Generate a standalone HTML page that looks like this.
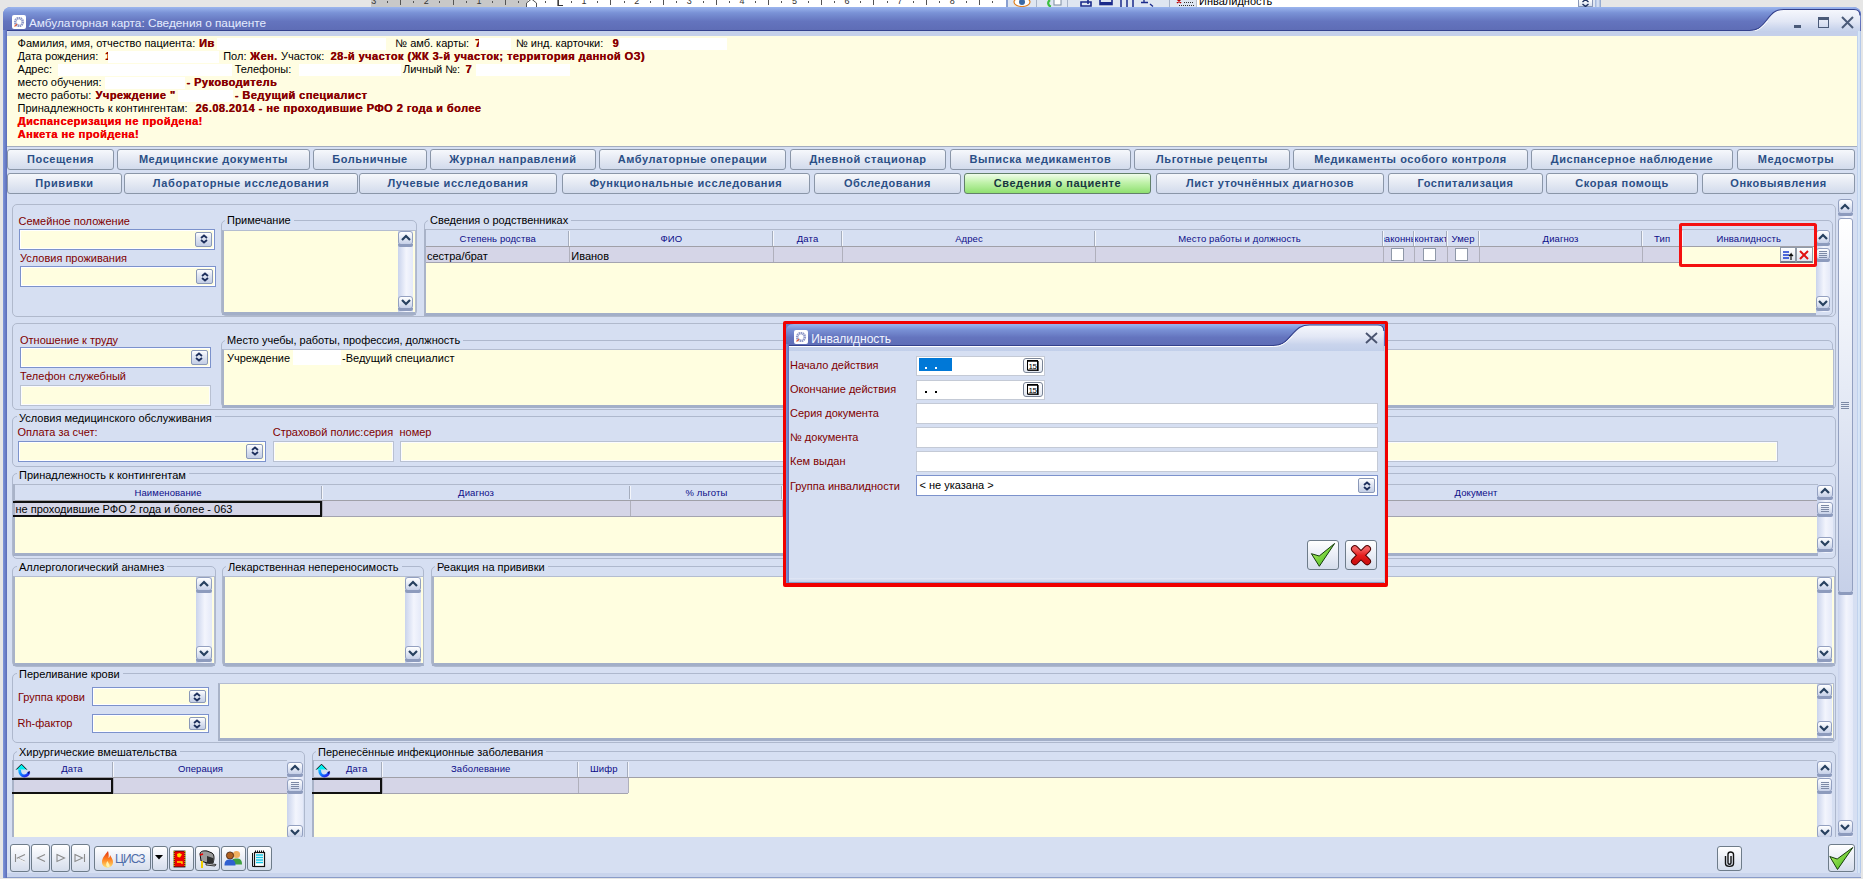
<!DOCTYPE html>
<html><head><meta charset="utf-8">
<style>
*{box-sizing:border-box;margin:0;padding:0}
html,body{width:1863px;height:879px;overflow:hidden;background:#e6e6e6;font-family:"Liberation Sans",sans-serif;font-size:11px;color:#000}
.a{position:absolute}
.t{position:absolute;white-space:nowrap;line-height:13px}
.lbl{color:#800000}
.b{font-weight:bold}
.hd{letter-spacing:0}
.dr{color:#880000;font-weight:bold;letter-spacing:0.45px;text-shadow:0.3px 0 0 #880000}
.rr{color:#f00000;font-weight:bold;letter-spacing:0.45px;text-shadow:0.3px 0 0 #f00000}
.wb{background:#fff}
.tab{position:absolute;height:20px;border:1px solid #8a96a8;border-radius:3px;background:linear-gradient(#f6f8fc,#e4e9f3 50%,#d2dbec);color:#2b4f86;font-weight:bold;letter-spacing:0.55px;text-align:center;line-height:19px;white-space:nowrap;overflow:hidden}
.tab.sel{background:linear-gradient(#f0fdea,#c0f2aa 45%,#8fe070);color:#17373f;border-color:#62806a}
.pnl{position:absolute;border:1px solid #b0b9cc;border-radius:5px}
.grp{position:absolute;border:1px solid #aeb8cd;border-radius:5px}
.cap{position:absolute;white-space:nowrap;line-height:13px;background:#d6dff2;padding:0 3px 0 2px;color:#000}
.inp{position:absolute;background:#fffee0;border:1px solid #b9c1d2;box-shadow:inset 0 0 0 1px #fbfcff}
.cmb{position:absolute;background:#fffee0;border:1px solid #7c92cc;box-shadow:inset 0 0 0 1px #fff}
.cbtn{position:absolute;right:2px;top:2px;bottom:2px;width:17px;border:1px solid #8a98b8;border-radius:2px;background:linear-gradient(#ffffff,#e4e9f4 35%,#c3cee6)}
.memo{position:absolute;background:#fffee0;border-left:2px solid #a9b3c8;border-top:1px solid #b4bdd0;border-bottom:3px solid #a3afc8;border-right:1px solid #b4bdd0}
.sbv{position:absolute;width:15px;background:linear-gradient(90deg,#c9d3ec,#f3f5fd 55%,#e4e9f8)}
.sbb{position:absolute;left:0;width:15px;border:1px solid #93a0c0;border-radius:3px;background:linear-gradient(#ffffff,#e6ebf6 45%,#c6d0e8)}
.sbb:after{content:"";position:absolute;left:-1px;right:-1px;bottom:-3px;height:3px;background:#8d9bbd;border-radius:0 0 2px 2px}
.gh{position:absolute;color:#0c0c88;display:flex;justify-content:center;align-items:center;white-space:nowrap;overflow:hidden;font-size:9.5px;letter-spacing:0.1px;padding-top:1px}
.gsep{position:absolute;width:2px;border-left:1px solid #a5adbd;border-right:1px solid #f4f6fb}
.gt{position:absolute;white-space:nowrap;line-height:16px;color:#000;font-size:11px}
</style></head>
<body>
<!-- window frame -->
<div class="a" style="left:3px;top:7px;width:1858px;height:871px;background:#6a7fc6;border-radius:8px 8px 0 0"></div>
<!-- title bar -->
<svg class="a" style="left:3px;top:7px" width="1858" height="29">
<defs><linearGradient id="mtbb" x1="0" y1="0" x2="0" y2="1"><stop offset="0" stop-color="#9cb6ee"/><stop offset="0.2" stop-color="#7a92d6"/><stop offset="0.5" stop-color="#6474be"/><stop offset="1" stop-color="#5a68b0"/></linearGradient>
<linearGradient id="mtbl" x1="0" y1="0" x2="0" y2="1"><stop offset="0" stop-color="#f6f8fd"/><stop offset="0.45" stop-color="#e2e7f5"/><stop offset="0.75" stop-color="#c9d4ec"/><stop offset="1" stop-color="#c2cfea"/></linearGradient></defs>
<path d="M0 29 V8 Q0 0 8 0 H1850 Q1858 0 1858 8 V29 Z" fill="url(#mtbb)"/>
<path d="M0 29 V23.5 H1746.6 C1754.1 23.5 1757.5 21 1763.7 13 C1769.8 5 1773.2 2.5 1780.7 2.5 H1851 Q1857 2.5 1857 8.5 V29 Z" fill="url(#mtbl)"/>
<path d="M0 23.5 H1746.6 C1754.1 23.5 1757.5 21 1763.7 13 C1769.8 5 1773.2 2.5 1780.7 2.5 H1851 Q1857 2.5 1857 8.5" fill="none" stroke="#34418c" stroke-width="1.1"/>
<path d="M0 24.5 H1746.6 C1754.1 24.5 1757.5 22 1764.7 14" fill="none" stroke="#ffffff" stroke-width="1"/>
</svg>
<!-- icon + title -->
<div class="a" style="left:3px;top:30px;width:4px;height:848px;background:linear-gradient(90deg,#7f96da,#5a6cb8)"></div>
<div class="a" style="left:12px;top:15px;width:14px;height:14px;background:#fff;border-radius:2px"></div>
<svg class="a" style="left:13px;top:16px" width="12" height="12"><circle cx="6" cy="6" r="3.8" fill="none" stroke="#8e98c8" stroke-width="2.6" stroke-dasharray="1.4 0.5"/><path d="M1.5 10.5 L4 8" stroke="#e06040" stroke-width="1.2"/></svg>
<div class="t" style="left:29px;top:16px;font-size:11.8px;line-height:14px;color:#e4ecff">Амбулаторная карта: Сведения о пациенте</div>
<!-- window buttons -->
<div class="a" style="left:1794px;top:25px;width:7px;height:3px;background:#4a5a78"></div>
<div class="a" style="left:1818px;top:17px;width:11px;height:11px;border:1.5px solid #4a5a78;border-top-width:3px"></div>
<svg class="a" style="left:1841px;top:16px" width="13" height="13"><path d="M1 1 L12 12 M12 1 L1 12" stroke="#4a5a78" stroke-width="2"/></svg>

<!-- content -->
<div class="a" style="left:7px;top:31px;width:1850px;height:842px;background:#d6dff2"></div>
<div class="a" style="left:7px;top:31px;width:1853px;height:5px;background:#c5d0ea;border-radius:5px 0 0 0"></div>
<div class="a" style="left:1857px;top:31px;width:4px;height:847px;background:linear-gradient(90deg,#b4c8e8,#e4f0fc 50%,#a4bce4)"></div>
<div class="a" style="left:7px;top:873px;width:1854px;height:5px;background:#c9d4ec;border-bottom:1px solid #8a9cc8"></div>

<!-- header info -->
<div class="a" style="left:7px;top:36px;width:1850px;height:111px;background:#fffde2;border-bottom:1px solid #a3acbf"></div>
<div class="t hd" style="left:17.6px;top:37px">Фамилия, имя, отчество пациента:</div>
<div class="t hd dr" style="left:199px;top:37px">Ив</div>
<div class="t hd" style="left:395.3px;top:37px">№ амб. карты:</div>
<div class="t hd dr" style="left:475px;top:37px">7</div>
<div class="t hd" style="left:516px;top:37px">№ инд. карточки:</div>
<div class="t hd dr" style="left:612.5px;top:37px">9</div>
<div class="t hd" style="left:17.6px;top:50px">Дата рождения:</div>
<div class="t hd dr" style="left:105px;top:50px">1</div>
<div class="t hd" style="left:223.2px;top:50px">Пол:</div>
<div class="t hd dr" style="left:250px;top:50px">Жен.</div>
<div class="t hd" style="left:281px;top:50px">Участок:</div>
<div class="t hd dr" style="left:330.5px;top:50px">28-й участок (ЖК 3-й участок; территория данной ОЗ)</div>
<div class="t hd" style="left:17.6px;top:63px">Адрес:</div>
<div class="t hd" style="left:234.7px;top:63px">Телефоны:</div>
<div class="t hd" style="left:403px;top:63px">Личный №:</div>
<div class="t hd dr" style="left:465.4px;top:63px">7</div>
<div class="t hd" style="left:17.6px;top:76px">место обучения:</div>
<div class="t hd dr" style="left:186.4px;top:76px">- Руководитель</div>
<div class="t hd" style="left:17.6px;top:89px">место работы:</div>
<div class="t hd dr" style="left:95.5px;top:89px">Учреждение "</div>
<div class="t hd dr" style="left:234.7px;top:89px">- Ведущий специалист</div>
<div class="t hd" style="left:17.6px;top:102px">Принадлежность к контингентам:</div>
<div class="t hd dr" style="left:195.5px;top:102px">26.08.2014 - не проходившие РФО 2 года и более</div>
<div class="t hd rr" style="left:17.6px;top:115px">Диспансеризация не пройдена!</div>
<div class="t hd rr" style="left:17.6px;top:128px">Анкета не пройдена!</div>
<div class="a wb" style="left:217px;top:38px;width:169.0px;height:12px"></div>
<div class="a wb" style="left:479px;top:38px;width:32.0px;height:12px"></div>
<div class="a wb" style="left:620px;top:38px;width:107.0px;height:12px"></div>
<div class="a wb" style="left:108px;top:51px;width:110.5px;height:12px"></div>
<div class="a wb" style="left:58px;top:64px;width:174.0px;height:12px"></div>
<div class="a wb" style="left:299px;top:64px;width:102.0px;height:12px"></div>
<div class="a wb" style="left:476px;top:64px;width:93.5px;height:12px"></div>
<div class="a wb" style="left:105px;top:77px;width:79.6px;height:12px"></div>
<div class="a wb" style="left:178px;top:90px;width:55.0px;height:12px"></div>

<!-- tabs -->
<div class="tab" style="left:7px;top:149px;height:21px;width:107px">Посещения</div>
<div class="tab" style="left:117px;top:149px;height:21px;width:193px">Медицинские документы</div>
<div class="tab" style="left:313px;top:149px;height:21px;width:114px">Больничные</div>
<div class="tab" style="left:430px;top:149px;height:21px;width:166px">Журнал направлений</div>
<div class="tab" style="left:599px;top:149px;height:21px;width:187px">Амбулаторные операции</div>
<div class="tab" style="left:790px;top:149px;height:21px;width:156px">Дневной стационар</div>
<div class="tab" style="left:950px;top:149px;height:21px;width:181px">Выписка медикаментов</div>
<div class="tab" style="left:1134px;top:149px;height:21px;width:156px">Льготные рецепты</div>
<div class="tab" style="left:1293px;top:149px;height:21px;width:235px">Медикаменты особого контроля</div>
<div class="tab" style="left:1531px;top:149px;height:21px;width:202px">Диспансерное наблюдение</div>
<div class="tab" style="left:1737px;top:149px;height:21px;width:118px">Медосмотры</div>
<div class="tab" style="left:7px;top:173px;height:21px;width:115px">Прививки</div>
<div class="tab" style="left:124px;top:173px;height:21px;width:234px">Лабораторные исследования</div>
<div class="tab" style="left:359px;top:173px;height:21px;width:198px">Лучевые исследования</div>
<div class="tab" style="left:562px;top:173px;height:21px;width:248px">Функциональные исследования</div>
<div class="tab" style="left:814px;top:173px;height:21px;width:147px">Обследования</div>
<div class="tab sel" style="left:964px;top:173px;height:21px;width:187px">Сведения о пациенте</div>
<div class="tab" style="left:1156px;top:173px;height:21px;width:228px">Лист уточнённых диагнозов</div>
<div class="tab" style="left:1388px;top:173px;height:21px;width:155px">Госпитализация</div>
<div class="tab" style="left:1546px;top:173px;height:21px;width:152px">Скорая помощь</div>
<div class="tab" style="left:1702px;top:173px;height:21px;width:153px">Онковыявления</div>


<!-- body -->
<div class="a" style="left:371px;top:0px;width:157px;height:7px;background:#c8c8c8"></div>
<div class="a" style="left:528px;top:0px;width:478px;height:7px;background:#fff"></div>
<div class="a" style="left:1006px;top:0px;width:2px;height:7px;background:#8aa0d0"></div>
<div class="t" style="left:371.2px;top:-4.5px;font-size:9px;line-height:10px;color:#333">3</div>
<div class="t" style="left:423.8px;top:-4.5px;font-size:9px;line-height:10px;color:#333">2</div>
<div class="t" style="left:476.4px;top:-4.5px;font-size:9px;line-height:10px;color:#333">1</div>
<div class="t" style="left:581.6px;top:-4.5px;font-size:9px;line-height:10px;color:#333">1</div>
<div class="t" style="left:634.2px;top:-4.5px;font-size:9px;line-height:10px;color:#333">2</div>
<div class="t" style="left:686.8px;top:-4.5px;font-size:9px;line-height:10px;color:#333">3</div>
<div class="t" style="left:739.4px;top:-4.5px;font-size:9px;line-height:10px;color:#333">4</div>
<div class="t" style="left:792px;top:-4.5px;font-size:9px;line-height:10px;color:#333">5</div>
<div class="t" style="left:844.6px;top:-4.5px;font-size:9px;line-height:10px;color:#333">6</div>
<div class="t" style="left:897.2px;top:-4.5px;font-size:9px;line-height:10px;color:#333">7</div>
<div class="t" style="left:949.8px;top:-4.5px;font-size:9px;line-height:10px;color:#333">8</div>
<div class="a" style="left:386.9px;top:1px;width:1px;height:2px;background:#555"></div>
<div class="a" style="left:400px;top:0px;width:1px;height:5px;background:#555"></div>
<div class="a" style="left:413.1px;top:1px;width:1px;height:2px;background:#555"></div>
<div class="a" style="left:439.4px;top:1px;width:1px;height:2px;background:#555"></div>
<div class="a" style="left:452.6px;top:0px;width:1px;height:5px;background:#555"></div>
<div class="a" style="left:465.8px;top:1px;width:1px;height:2px;background:#555"></div>
<div class="a" style="left:492.1px;top:1px;width:1px;height:2px;background:#555"></div>
<div class="a" style="left:505.2px;top:0px;width:1px;height:5px;background:#555"></div>
<div class="a" style="left:518.4px;top:1px;width:1px;height:2px;background:#555"></div>
<div class="a" style="left:544.6px;top:1px;width:1px;height:2px;background:#555"></div>
<div class="a" style="left:557.8px;top:0px;width:1px;height:5px;background:#555"></div>
<div class="a" style="left:571px;top:1px;width:1px;height:2px;background:#555"></div>
<div class="a" style="left:597.2px;top:1px;width:1px;height:2px;background:#555"></div>
<div class="a" style="left:610.4px;top:0px;width:1px;height:5px;background:#555"></div>
<div class="a" style="left:623.5px;top:1px;width:1px;height:2px;background:#555"></div>
<div class="a" style="left:649.9px;top:1px;width:1px;height:2px;background:#555"></div>
<div class="a" style="left:663px;top:0px;width:1px;height:5px;background:#555"></div>
<div class="a" style="left:676.1px;top:1px;width:1px;height:2px;background:#555"></div>
<div class="a" style="left:702.5px;top:1px;width:1px;height:2px;background:#555"></div>
<div class="a" style="left:715.6px;top:0px;width:1px;height:5px;background:#555"></div>
<div class="a" style="left:728.8px;top:1px;width:1px;height:2px;background:#555"></div>
<div class="a" style="left:755px;top:1px;width:1px;height:2px;background:#555"></div>
<div class="a" style="left:768.2px;top:0px;width:1px;height:5px;background:#555"></div>
<div class="a" style="left:781.4px;top:1px;width:1px;height:2px;background:#555"></div>
<div class="a" style="left:807.7px;top:1px;width:1px;height:2px;background:#555"></div>
<div class="a" style="left:820.8px;top:0px;width:1px;height:5px;background:#555"></div>
<div class="a" style="left:834px;top:1px;width:1px;height:2px;background:#555"></div>
<div class="a" style="left:860.2px;top:1px;width:1px;height:2px;background:#555"></div>
<div class="a" style="left:873.4px;top:0px;width:1px;height:5px;background:#555"></div>
<div class="a" style="left:886.5px;top:1px;width:1px;height:2px;background:#555"></div>
<div class="a" style="left:912.9px;top:1px;width:1px;height:2px;background:#555"></div>
<div class="a" style="left:926px;top:0px;width:1px;height:5px;background:#555"></div>
<div class="a" style="left:939.2px;top:1px;width:1px;height:2px;background:#555"></div>
<div class="a" style="left:965.5px;top:1px;width:1px;height:2px;background:#555"></div>
<div class="a" style="left:978.6px;top:0px;width:1px;height:5px;background:#555"></div>
<div class="a" style="left:991.8px;top:1px;width:1px;height:2px;background:#555"></div>
<svg class="a" style="left:526px;top:0" width="11" height="7"><path d="M0.5 7 V3 L5.5 -1 L10.5 3 V7" fill="#fff" stroke="#555" stroke-width="1"/></svg>
<svg class="a" style="left:557px;top:0" width="7" height="7"><path d="M1 0 V5.5 H6" fill="none" stroke="#333" stroke-width="1.2"/></svg>
<div class="a" style="left:1008px;top:0px;width:592px;height:7px;background:#dfe6f1"></div>
<svg class="a" style="left:1012px;top:0" width="20" height="7"><ellipse cx="10" cy="2" rx="8" ry="4.5" fill="#fff" stroke="#e08020" stroke-width="1.2"/><circle cx="10" cy="2" r="3" fill="#3a6aa8"/></svg>
<div class="a" style="left:1036px;top:0px;width:1px;height:7px;background:#a8b4c8"></div>
<svg class="a" style="left:1047px;top:0" width="16" height="7"><path d="M3 0 C0 2 1 6 4 6.5" stroke="#3cc040" stroke-width="2.2" fill="none"/><rect x="7" y="-2" width="7" height="7" fill="#fff" stroke="#7a8aa0"/></svg>
<div class="a" style="left:1067px;top:0px;width:1px;height:7px;background:#a8b4c8"></div>
<svg class="a" style="left:1076px;top:0" width="90" height="7"><path d="M2 -1 H12 V4 M5 2 H15 V6 H5 Z" fill="none" stroke="#1a2a8a" stroke-width="1.6"/><rect x="24" y="-1" width="12" height="5.5" fill="none" stroke="#1a2a8a" stroke-width="1.6"/><rect x="24" y="2" width="12" height="2.5" fill="#1a2a8a"/><path d="M45 -1 H57 V7 M51 -1 V7 M45 -1 V7" fill="none" stroke="#1a2a8a" stroke-width="1.5"/><path d="M68 -1 V2 M65 2.5 H72 M74 4 L77 6.5" stroke="#1a2a8a" stroke-width="1.3" fill="none"/></svg>
<div class="a" style="left:1169px;top:0px;width:1px;height:7px;background:#a8b4c8"></div>
<svg class="a" style="left:1176px;top:0" width="20" height="7"><path d="M1 -1 L5 3 M5 -1 L1 3" stroke="#b00" stroke-width="1.5"/><path d="M3 5.5 H18 M8 2.5 H18" stroke="#333" stroke-width="1" stroke-dasharray="1 1"/></svg>
<div class="a" style="left:1196px;top:0px;width:382px;height:7px;background:#fff;border-left:1px solid #b8c0cc"></div>
<div class="t" style="left:1199px;top:-5.5px;font-size:11px;line-height:12px;color:#000">Инвалидность</div>
<div class="a" style="left:1578px;top:0px;width:15px;height:7px;background:linear-gradient(#fff,#d8e0ee);border:1px solid #8a98b8;border-top:none"></div>
<svg class="a" style="left:1581px;top:0" width="9" height="7"><path d="M1.5 2 L4.5 -0.5 L7.5 2 M1.5 4 L4.5 6.5 L7.5 4" stroke="#1d2f5c" stroke-width="1.4" fill="none"/></svg>
<div class="a" style="left:1595px;top:0px;width:6px;height:7px;background:linear-gradient(90deg,#9ab0d8,#dfe8f8,#8aa0c8)"></div>
<div class="a" style="left:1601px;top:0px;width:262px;height:7px;background:#e6e6e6"></div>
<div class="sbv" style="left:1837.5px;top:199px;width:15.5px;height:637.5px;"></div>
<div class="sbb" style="left:1837.5px;top:199px;width:15.5px;height:15px"></div>
<svg class="a" style="left:1840.2px;top:202.5px" width="10" height="8"><path d="M1 6 L5 2 L9 6" fill="none" stroke="#27405f" stroke-width="2.2"/></svg>
<div class="sbb" style="left:1837.5px;top:217.5px;width:15.5px;height:375.5px"></div>
<svg class="a" style="left:1841.2px;top:401.2px" width="8" height="8"><path d="M0 1.5 H8 M0 3.5 H8 M0 5.5 H8 M0 7.5 H8" stroke="#7d8aa6" stroke-width="1"/></svg>
<div class="sbb" style="left:1837.5px;top:820px;width:15.5px;height:13.5px"></div>
<svg class="a" style="left:1840.2px;top:822.8px" width="10" height="8"><path d="M1 2 L5 6 L9 2" fill="none" stroke="#27405f" stroke-width="2.2"/></svg>
<div class="pnl" style="left:12px;top:204px;width:1824px;height:113px;"></div>
<div class="t lbl" style="left:18.5px;top:214.8px;">Семейное положение</div>
<div class="cmb" style="left:19px;top:229px;width:196px;height:20.5px;background:#fffee0"><div class="cbtn"></div></div>
<svg class="a" style="left:199.5px;top:234.2px" width="8" height="10"><path d="M1 4 L4 1.5 L7 4 M1 6 L4 8.5 L7 6" fill="none" stroke="#1d2f5c" stroke-width="1.8"/></svg>
<div class="t lbl" style="left:20px;top:251.7px;">Условия проживания</div>
<div class="cmb" style="left:20px;top:266px;width:196px;height:21px;background:#fffee0"><div class="cbtn"></div></div>
<svg class="a" style="left:200.5px;top:271.5px" width="8" height="10"><path d="M1 4 L4 1.5 L7 4 M1 6 L4 8.5 L7 6" fill="none" stroke="#1d2f5c" stroke-width="1.8"/></svg>
<div class="grp" style="left:220.7px;top:219.8px;width:196.6px;height:96.2px;"></div>
<div class="cap" style="left:225px;top:214.1px;">Примечание</div>
<div class="memo" style="left:222px;top:230.3px;width:193.5px;height:84.7px;"></div>
<div class="sbv" style="left:398.4px;top:231px;width:15.1px;height:81px;"></div>
<div class="sbb" style="left:398.4px;top:231.3px;width:15.1px;height:13.4px"></div>
<svg class="a" style="left:400.9px;top:234px" width="10" height="8"><path d="M1 6 L5 2 L9 6" fill="none" stroke="#27405f" stroke-width="2.2"/></svg>
<div class="sbb" style="left:398.4px;top:295.8px;width:15.1px;height:13.2px"></div>
<svg class="a" style="left:400.9px;top:298.4px" width="10" height="8"><path d="M1 2 L5 6 L9 2" fill="none" stroke="#27405f" stroke-width="2.2"/></svg>
<div class="grp" style="left:424px;top:219.5px;width:1409px;height:96.5px;"></div>
<div class="cap" style="left:428px;top:214.1px;">Сведения о родственниках</div>
<div class="a" style="left:424px;top:229px;width:1391.5px;height:86.5px;background:#fffee0;border-left:2px solid #a9b3c8;border-bottom:3px solid #a3afc8"></div>
<div class="a" style="left:426px;top:229px;width:1389.5px;height:18.4px;background:#d6dff2;border-top:1px solid #b0b9cc"></div>
<div class="a" style="left:426px;top:246.4px;width:1389.5px;height:1px;background:#a0a0a8"></div>
<div class="a" style="left:426px;top:247.4px;width:1389.5px;height:16.1px;background:#d5d5e7;border-bottom:1px solid #a4a4b0"></div>
<div class="gh" style="left:426px;top:229px;width:143.3px;height:17.4px;line-height:17.4px">Степень родства</div>
<div class="gsep" style="left:568.3px;top:231px;width:2px;height:15.4px;"></div>
<div class="a" style="left:569.3px;top:247.4px;width:1px;height:15.1px;background:#b0b0bc"></div>
<div class="gh" style="left:570.3px;top:229px;width:202.2px;height:17.4px;line-height:17.4px">ФИО</div>
<div class="gsep" style="left:771.5px;top:231px;width:2px;height:15.4px;"></div>
<div class="a" style="left:772.5px;top:247.4px;width:1px;height:15.1px;background:#b0b0bc"></div>
<div class="gh" style="left:773.5px;top:229px;width:68.1px;height:17.4px;line-height:17.4px">Дата</div>
<div class="gsep" style="left:840.6px;top:231px;width:2px;height:15.4px;"></div>
<div class="a" style="left:841.6px;top:247.4px;width:1px;height:15.1px;background:#b0b0bc"></div>
<div class="gh" style="left:842.6px;top:229px;width:252.8px;height:17.4px;line-height:17.4px">Адрес</div>
<div class="gsep" style="left:1094.4px;top:231px;width:2px;height:15.4px;"></div>
<div class="a" style="left:1095.4px;top:247.4px;width:1px;height:15.1px;background:#b0b0bc"></div>
<div class="gh" style="left:1096.4px;top:229px;width:286.2px;height:17.4px;line-height:17.4px">Место работы и должность</div>
<div class="gsep" style="left:1381.6px;top:231px;width:2px;height:15.4px;"></div>
<div class="a" style="left:1382.6px;top:247.4px;width:1px;height:15.1px;background:#b0b0bc"></div>
<div class="gh" style="left:1383.6px;top:229px;width:30.8px;height:17.4px;line-height:17.4px">законны</div>
<div class="gsep" style="left:1413.4px;top:231px;width:2px;height:15.4px;"></div>
<div class="a" style="left:1414.4px;top:247.4px;width:1px;height:15.1px;background:#b0b0bc"></div>
<div class="gh" style="left:1415.4px;top:229px;width:31.3px;height:17.4px;line-height:17.4px">контакт</div>
<div class="gsep" style="left:1445.7px;top:231px;width:2px;height:15.4px;"></div>
<div class="a" style="left:1446.7px;top:247.4px;width:1px;height:15.1px;background:#b0b0bc"></div>
<div class="gh" style="left:1447.7px;top:229px;width:30.8px;height:17.4px;line-height:17.4px">Умер</div>
<div class="gsep" style="left:1477.5px;top:231px;width:2px;height:15.4px;"></div>
<div class="a" style="left:1478.5px;top:247.4px;width:1px;height:15.1px;background:#b0b0bc"></div>
<div class="gh" style="left:1479.5px;top:229px;width:162.2px;height:17.4px;line-height:17.4px">Диагноз</div>
<div class="gsep" style="left:1640.7px;top:231px;width:2px;height:15.4px;"></div>
<div class="a" style="left:1641.7px;top:247.4px;width:1px;height:15.1px;background:#b0b0bc"></div>
<div class="gh" style="left:1642.7px;top:229px;width:38.9px;height:17.4px;line-height:17.4px">Тип</div>
<div class="gsep" style="left:1680.6px;top:231px;width:2px;height:15.4px;"></div>
<div class="a" style="left:1681.6px;top:247.4px;width:1px;height:15.1px;background:#b0b0bc"></div>
<div class="gh" style="left:1682.6px;top:229px;width:132.4px;height:17.4px;line-height:17.4px">Инвалидность</div>
<div class="gt" style="left:427px;top:247.9px;line-height:16.1px">сестра/брат</div>
<div class="gt" style="left:571.3px;top:247.9px;line-height:16.1px">Иванов</div>
<div class="a" style="left:1391px;top:248px;width:13px;height:13px;background:#fff;border:1px solid #8f98a8"></div>
<div class="a" style="left:1423px;top:248px;width:13px;height:13px;background:#fff;border:1px solid #8f98a8"></div>
<div class="a" style="left:1455.2px;top:248px;width:13px;height:13px;background:#fff;border:1px solid #8f98a8"></div>
<div class="a" style="left:1680px;top:246.5px;width:135px;height:17px;background:#fffee0"></div>
<div class="a" style="left:1780.4px;top:247px;width:16px;height:16px;background:linear-gradient(#fff,#dde3ef);border:1px solid #909aa8;border-bottom:2px solid #707a88"></div>
<svg class="a" style="left:1783px;top:250px" width="11" height="11"><path d="M0 2 H6 M0 5 H6 M0 8 H6" stroke="#1a3ad0" stroke-width="1.4"/><path d="M8 10 V4 L6 6 M8 4 L10 6" stroke="#111" stroke-width="1.2" fill="none"/></svg>
<div class="a" style="left:1796.4px;top:247px;width:16.4px;height:16px;background:linear-gradient(#fff,#dde3ef);border:1px solid #909aa8;border-bottom:2px solid #707a88"></div>
<svg class="a" style="left:1799px;top:250px" width="10" height="10"><path d="M1 1 L9 9 M9 1 L1 9" stroke="#e01010" stroke-width="2"/></svg>
<div class="sbv" style="left:1815.8px;top:230.4px;width:14.6px;height:82.1px;"></div>
<div class="sbb" style="left:1815.8px;top:230.4px;width:14.6px;height:13.2px"></div>
<svg class="a" style="left:1818.1px;top:233px" width="10" height="8"><path d="M1 6 L5 2 L9 6" fill="none" stroke="#27405f" stroke-width="2.2"/></svg>
<div class="sbb" style="left:1815.8px;top:248.2px;width:14.6px;height:12.1px"></div>
<svg class="a" style="left:1819.1px;top:250.2px" width="8" height="8"><path d="M0 1.5 H8 M0 3.5 H8 M0 5.5 H8 M0 7.5 H8" stroke="#7d8aa6" stroke-width="1"/></svg>
<div class="sbb" style="left:1815.8px;top:296.3px;width:14.6px;height:13.2px"></div>
<svg class="a" style="left:1818.1px;top:298.9px" width="10" height="8"><path d="M1 2 L5 6 L9 2" fill="none" stroke="#27405f" stroke-width="2.2"/></svg>
<div class="a" style="left:1679px;top:223px;width:138px;height:44px;border:3.2px solid #f41010;border-radius:2.5px"></div>
<div class="pnl" style="left:12px;top:323px;width:1824px;height:87px;"></div>
<div class="t lbl" style="left:20px;top:333.7px;">Отношение к труду</div>
<div class="cmb" style="left:20px;top:347px;width:190.5px;height:20.5px;background:#fffee0"><div class="cbtn"></div></div>
<svg class="a" style="left:195px;top:352.2px" width="8" height="10"><path d="M1 4 L4 1.5 L7 4 M1 6 L4 8.5 L7 6" fill="none" stroke="#1d2f5c" stroke-width="1.8"/></svg>
<div class="t lbl" style="left:20px;top:369.5px;">Телефон служебный</div>
<div class="inp" style="left:20px;top:385px;width:190.5px;height:20.5px;background:#fffee0"></div>
<div class="grp" style="left:220.7px;top:339.6px;width:1612.8px;height:68.9px;"></div>
<div class="cap" style="left:225px;top:333.7px;">Место учебы, работы, профессия, должность</div>
<div class="memo" style="left:222px;top:348.7px;width:1611.5px;height:59.3px;"></div>
<div class="t" style="left:227px;top:351.5px;">Учреждение</div>
<div class="a" style="left:293px;top:350px;width:48px;height:15px;background:#fff"></div>
<div class="t" style="left:342px;top:351.5px;">-Ведущий специалист</div>
<div class="grp" style="left:12px;top:416px;width:1824px;height:51px;"></div>
<div class="cap" style="left:17px;top:411.5px;">Условия медицинского обслуживания</div>
<div class="t lbl" style="left:17.5px;top:425.5px;">Оплата за счет:</div>
<div class="cmb" style="left:18px;top:441px;width:248px;height:20.5px;background:#fffee0"><div class="cbtn"></div></div>
<svg class="a" style="left:250.5px;top:446.2px" width="8" height="10"><path d="M1 4 L4 1.5 L7 4 M1 6 L4 8.5 L7 6" fill="none" stroke="#1d2f5c" stroke-width="1.8"/></svg>
<div class="t lbl" style="left:272.7px;top:425.5px;">Страховой полис:серия</div>
<div class="inp" style="left:273px;top:441px;width:121px;height:20.5px;background:#fffee0"></div>
<div class="t lbl" style="left:399.5px;top:425.5px;">номер</div>
<div class="inp" style="left:400px;top:441px;width:1378px;height:20.5px;background:#fffee0"></div>
<div class="grp" style="left:12px;top:473px;width:1824px;height:86px;"></div>
<div class="cap" style="left:17px;top:468.5px;">Принадлежность к контингентам</div>
<div class="a" style="left:12.5px;top:484.4px;width:1805px;height:71.6px;background:#fffee0;border-left:2px solid #a9b3c8;border-bottom:3px solid #a3afc8"></div>
<div class="a" style="left:14.5px;top:484.4px;width:1803px;height:16.1px;background:#d6dff2;border-top:1px solid #b0b9cc"></div>
<div class="a" style="left:14.5px;top:499.5px;width:1803px;height:1px;background:#a0a0a8"></div>
<div class="a" style="left:14.5px;top:500.5px;width:1803px;height:16px;background:#d5d5e7;border-bottom:1px solid #a4a4b0"></div>
<div class="gh" style="left:14.5px;top:484.4px;width:307.1px;height:15.1px;line-height:15.1px">Наименование</div>
<div class="gsep" style="left:320.6px;top:486.4px;width:2px;height:13.1px;"></div>
<div class="a" style="left:321.6px;top:500.5px;width:1px;height:15px;background:#b0b0bc"></div>
<div class="gh" style="left:322.6px;top:484.4px;width:307px;height:15.1px;line-height:15.1px">Диагноз</div>
<div class="gsep" style="left:628.6px;top:486.4px;width:2px;height:13.1px;"></div>
<div class="a" style="left:629.6px;top:500.5px;width:1px;height:15px;background:#b0b0bc"></div>
<div class="gh" style="left:630.6px;top:484.4px;width:151.7px;height:15.1px;line-height:15.1px">% льготы</div>
<div class="gsep" style="left:781.3px;top:486.4px;width:2px;height:13.1px;"></div>
<div class="a" style="left:782.3px;top:500.5px;width:1px;height:15px;background:#b0b0bc"></div>
<div class="gh" style="left:783.3px;top:484.4px;width:176.7px;height:15.1px;line-height:15.1px">Дата начала</div>
<div class="gsep" style="left:959px;top:486.4px;width:2px;height:13.1px;"></div>
<div class="a" style="left:960px;top:500.5px;width:1px;height:15px;background:#b0b0bc"></div>
<div class="gh" style="left:961px;top:484.4px;width:173px;height:15.1px;line-height:15.1px">Дата окончания</div>
<div class="gsep" style="left:1133px;top:486.4px;width:2px;height:13.1px;"></div>
<div class="a" style="left:1134px;top:500.5px;width:1px;height:15px;background:#b0b0bc"></div>
<div class="gh" style="left:1135px;top:484.4px;width:682px;height:15.1px;line-height:15.1px">Документ</div>
<div class="gt" style="left:15.5px;top:501px;line-height:16px">не проходившие РФО 2 года и более - 063</div>
<div class="a" style="left:12.5px;top:500.5px;width:309.1px;height:16px;border:2px solid #111;border-left:none"></div>
<div class="sbv" style="left:1817px;top:484.7px;width:16px;height:68.3px;"></div>
<div class="sbb" style="left:1817px;top:484.7px;width:16px;height:13.5px"></div>
<svg class="a" style="left:1820px;top:487.4px" width="10" height="8"><path d="M1 6 L5 2 L9 6" fill="none" stroke="#27405f" stroke-width="2.2"/></svg>
<div class="sbb" style="left:1817px;top:501.5px;width:16px;height:13.5px"></div>
<svg class="a" style="left:1821px;top:504.2px" width="8" height="8"><path d="M0 1.5 H8 M0 3.5 H8 M0 5.5 H8 M0 7.5 H8" stroke="#7d8aa6" stroke-width="1"/></svg>
<div class="sbb" style="left:1817px;top:536.5px;width:16px;height:13.5px"></div>
<svg class="a" style="left:1820px;top:539.2px" width="10" height="8"><path d="M1 2 L5 6 L9 2" fill="none" stroke="#27405f" stroke-width="2.2"/></svg>
<div class="grp" style="left:12px;top:566px;width:203.5px;height:101px;"></div>
<div class="cap" style="left:17px;top:560.5px;">Аллергологический анамнез</div>
<div class="memo" style="left:13px;top:575.8px;width:201.5px;height:90.2px;"></div>
<div class="sbv" style="left:196px;top:576.5px;width:16px;height:86.5px;"></div>
<div class="sbb" style="left:196px;top:577px;width:16px;height:14px"></div>
<svg class="a" style="left:199px;top:580px" width="10" height="8"><path d="M1 6 L5 2 L9 6" fill="none" stroke="#27405f" stroke-width="2.2"/></svg>
<div class="sbb" style="left:196px;top:646px;width:16px;height:14px"></div>
<svg class="a" style="left:199px;top:649px" width="10" height="8"><path d="M1 2 L5 6 L9 2" fill="none" stroke="#27405f" stroke-width="2.2"/></svg>
<div class="grp" style="left:221.6px;top:566px;width:202.9px;height:101px;"></div>
<div class="cap" style="left:226px;top:560.5px;">Лекарственная непереносимость</div>
<div class="memo" style="left:222.5px;top:575.8px;width:201px;height:90.2px;"></div>
<div class="sbv" style="left:405px;top:576.5px;width:15.8px;height:86.5px;"></div>
<div class="sbb" style="left:405px;top:577px;width:15.8px;height:14px"></div>
<svg class="a" style="left:407.9px;top:580px" width="10" height="8"><path d="M1 6 L5 2 L9 6" fill="none" stroke="#27405f" stroke-width="2.2"/></svg>
<div class="sbb" style="left:405px;top:646px;width:15.8px;height:14px"></div>
<svg class="a" style="left:407.9px;top:649px" width="10" height="8"><path d="M1 2 L5 6 L9 2" fill="none" stroke="#27405f" stroke-width="2.2"/></svg>
<div class="grp" style="left:431px;top:566px;width:1405px;height:101px;"></div>
<div class="cap" style="left:435px;top:560.5px;">Реакция на прививки</div>
<div class="memo" style="left:432px;top:575.8px;width:1402.5px;height:90.2px;"></div>
<div class="sbv" style="left:1816.6px;top:576.5px;width:15.4px;height:86.5px;"></div>
<div class="sbb" style="left:1816.6px;top:577px;width:15.4px;height:14px"></div>
<svg class="a" style="left:1819.3px;top:580px" width="10" height="8"><path d="M1 6 L5 2 L9 6" fill="none" stroke="#27405f" stroke-width="2.2"/></svg>
<div class="sbb" style="left:1816.6px;top:646px;width:15.4px;height:14px"></div>
<svg class="a" style="left:1819.3px;top:649px" width="10" height="8"><path d="M1 2 L5 6 L9 2" fill="none" stroke="#27405f" stroke-width="2.2"/></svg>
<div class="grp" style="left:12px;top:673px;width:1824px;height:70px;"></div>
<div class="cap" style="left:17px;top:667.7px;">Переливание крови</div>
<div class="t lbl" style="left:18px;top:690.9px;">Группа крови</div>
<div class="cmb" style="left:92.3px;top:686.6px;width:116.5px;height:19.8px;background:#fffee0"><div class="cbtn"></div></div>
<svg class="a" style="left:193.3px;top:691.5px" width="8" height="10"><path d="M1 4 L4 1.5 L7 4 M1 6 L4 8.5 L7 6" fill="none" stroke="#1d2f5c" stroke-width="1.8"/></svg>
<div class="t lbl" style="left:17.5px;top:716.7px;">Rh-фактор</div>
<div class="cmb" style="left:92.3px;top:713.7px;width:116.5px;height:19.8px;background:#fffee0"><div class="cbtn"></div></div>
<svg class="a" style="left:193.3px;top:718.6px" width="8" height="10"><path d="M1 4 L4 1.5 L7 4 M1 6 L4 8.5 L7 6" fill="none" stroke="#1d2f5c" stroke-width="1.8"/></svg>
<div class="memo" style="left:217.8px;top:682.7px;width:1616.7px;height:58.3px;"></div>
<div class="sbv" style="left:1816.6px;top:683.5px;width:15.4px;height:54px;"></div>
<div class="sbb" style="left:1816.6px;top:684.4px;width:15.4px;height:13.1px"></div>
<svg class="a" style="left:1819.3px;top:687px" width="10" height="8"><path d="M1 6 L5 2 L9 6" fill="none" stroke="#27405f" stroke-width="2.2"/></svg>
<div class="sbb" style="left:1816.6px;top:721.3px;width:15.4px;height:13.2px"></div>
<svg class="a" style="left:1819.3px;top:723.9px" width="10" height="8"><path d="M1 2 L5 6 L9 2" fill="none" stroke="#27405f" stroke-width="2.2"/></svg>
<div class="grp" style="left:12.5px;top:750.5px;width:292.5px;height:94.5px;"></div>
<div class="cap" style="left:17px;top:745.5px;">Хирургические вмешательства</div>
<div class="a" style="left:12.8px;top:836.7px;width:293.2px;height:8.3px;background:#d6dff2"></div>
<div class="a" style="left:12px;top:760px;width:275.4px;height:80px;background:#fffee0;border-left:2px solid #a9b3c8;border-bottom:3px solid #a3afc8"></div>
<div class="a" style="left:14px;top:760px;width:273.4px;height:17.5px;background:#d6dff2;border-top:1px solid #b0b9cc"></div>
<div class="a" style="left:14px;top:776.5px;width:273.4px;height:1px;background:#a0a0a8"></div>
<div class="a" style="left:14px;top:777.5px;width:273.4px;height:16.5px;background:#d5d5e7;border-bottom:1px solid #a4a4b0"></div>
<div class="gh" style="left:31px;top:760px;width:82px;height:16.5px;line-height:16.5px">Дата</div>
<div class="gsep" style="left:112px;top:762px;width:2px;height:14.5px;"></div>
<div class="a" style="left:113px;top:777.5px;width:1px;height:15.5px;background:#b0b0bc"></div>
<div class="gh" style="left:114px;top:760px;width:173px;height:16.5px;line-height:16.5px">Операция</div>
<div class="a" style="left:12px;top:777.5px;width:101px;height:16.5px;border:2px solid #111;border-left:none"></div>
<div class="sbv" style="left:287.4px;top:761.5px;width:15.2px;height:78.5px;"></div>
<div class="sbb" style="left:287.4px;top:761.5px;width:15.2px;height:13.5px"></div>
<svg class="a" style="left:290px;top:764.2px" width="10" height="8"><path d="M1 6 L5 2 L9 6" fill="none" stroke="#27405f" stroke-width="2.2"/></svg>
<div class="sbb" style="left:287.4px;top:778.5px;width:15.2px;height:13.5px"></div>
<svg class="a" style="left:291px;top:781.2px" width="8" height="8"><path d="M0 1.5 H8 M0 3.5 H8 M0 5.5 H8 M0 7.5 H8" stroke="#7d8aa6" stroke-width="1"/></svg>
<div class="sbb" style="left:287.4px;top:825px;width:15.2px;height:13px"></div>
<svg class="a" style="left:290px;top:827.5px" width="10" height="8"><path d="M1 2 L5 6 L9 2" fill="none" stroke="#27405f" stroke-width="2.2"/></svg>
<div class="a" style="left:10px;top:836.7px;width:1826px;height:8.3px;background:#d6dff2"></div>
<div class="grp" style="left:311.8px;top:750.5px;width:1524.2px;height:94.5px;"></div>
<div class="cap" style="left:316px;top:745.5px;">Перенесённые инфекционные заболевания</div>
<div class="a" style="left:312px;top:760px;width:1505.3px;height:85px;background:#fffee0;border-left:2px solid #a9b3c8;border-bottom:3px solid #a3afc8"></div>
<div class="a" style="left:314px;top:760px;width:1503.3px;height:17.5px;background:#d6dff2;border-top:1px solid #b0b9cc"></div>
<div class="a" style="left:314px;top:776.5px;width:1503.3px;height:1px;background:#a0a0a8"></div>
<div class="a" style="left:314px;top:777.5px;width:314.3px;height:16.5px;background:#d5d5e7;border-bottom:1px solid #a4a4b0"></div>
<div class="gh" style="left:331px;top:760px;width:51.2px;height:16.5px;line-height:16.5px">Дата</div>
<div class="gsep" style="left:381.2px;top:762px;width:2px;height:14.5px;"></div>
<div class="a" style="left:382.2px;top:777.5px;width:1px;height:15.5px;background:#b0b0bc"></div>
<div class="gh" style="left:383.2px;top:760px;width:195.1px;height:16.5px;line-height:16.5px">Заболевание</div>
<div class="gsep" style="left:577.3px;top:762px;width:2px;height:14.5px;"></div>
<div class="a" style="left:578.3px;top:777.5px;width:1px;height:15.5px;background:#b0b0bc"></div>
<div class="gh" style="left:579.3px;top:760px;width:49px;height:16.5px;line-height:16.5px">Шифр</div>
<div class="gsep" style="left:627.3px;top:762px;width:2px;height:14.5px;"></div>
<div class="a" style="left:628.3px;top:777.5px;width:1px;height:15.5px;background:#b0b0bc"></div>
<div class="a" style="left:312px;top:777.5px;width:70.2px;height:16.5px;border:2px solid #111;border-left:none"></div>
<div class="sbv" style="left:1817.3px;top:761.4px;width:15.1px;height:78.6px;"></div>
<div class="sbb" style="left:1817.3px;top:761.4px;width:15.1px;height:13.5px"></div>
<svg class="a" style="left:1819.8px;top:764.1px" width="10" height="8"><path d="M1 6 L5 2 L9 6" fill="none" stroke="#27405f" stroke-width="2.2"/></svg>
<div class="sbb" style="left:1817.3px;top:778px;width:15.1px;height:14px"></div>
<svg class="a" style="left:1820.8px;top:781px" width="8" height="8"><path d="M0 1.5 H8 M0 3.5 H8 M0 5.5 H8 M0 7.5 H8" stroke="#7d8aa6" stroke-width="1"/></svg>
<div class="sbb" style="left:1817.3px;top:825px;width:15.1px;height:13px"></div>
<svg class="a" style="left:1819.8px;top:827.5px" width="10" height="8"><path d="M1 2 L5 6 L9 2" fill="none" stroke="#27405f" stroke-width="2.2"/></svg>
<div class="a" style="left:10px;top:836.7px;width:1826px;height:8.3px;background:#d6dff2"></div>
<svg class="a" style="left:15px;top:763px" width="16" height="15"><defs><linearGradient id="si15" x1="0" y1="0" x2="1" y2="1"><stop offset="0" stop-color="#10c0ff"/><stop offset="0.6" stop-color="#1060ff"/><stop offset="1" stop-color="#3010e0"/></linearGradient></defs><path d="M4.6 6.5 C4.6 10.5 6.5 13 9.2 13 C11.5 13 13.2 11.5 14 9.3" fill="none" stroke="url(#si15)" stroke-width="2.8"/><path d="M14.5 8.3 L13.2 10.3" stroke="#000060" stroke-width="1.4"/><path d="M1.2 6.6 L6.5 1.2 L11.8 6.6 Z" fill="#00f0f0"/><path d="M1.2 6.6 L6.5 1.2 L11.8 6.6" fill="none" stroke="#101010" stroke-width="1"/></svg>
<svg class="a" style="left:314.5px;top:763px" width="16" height="15"><defs><linearGradient id="si314" x1="0" y1="0" x2="1" y2="1"><stop offset="0" stop-color="#10c0ff"/><stop offset="0.6" stop-color="#1060ff"/><stop offset="1" stop-color="#3010e0"/></linearGradient></defs><path d="M4.6 6.5 C4.6 10.5 6.5 13 9.2 13 C11.5 13 13.2 11.5 14 9.3" fill="none" stroke="url(#si314)" stroke-width="2.8"/><path d="M14.5 8.3 L13.2 10.3" stroke="#000060" stroke-width="1.4"/><path d="M1.2 6.6 L6.5 1.2 L11.8 6.6 Z" fill="#00f0f0"/><path d="M1.2 6.6 L6.5 1.2 L11.8 6.6" fill="none" stroke="#101010" stroke-width="1"/></svg>
<div class="a" style="left:10px;top:844px;width:19.5px;height:27.5px;border:1px solid #6e7c8a;border-radius:3px;background:linear-gradient(#ffffff,#eef1f8 40%,#d5ddec);"></div>
<div class="a" style="left:30.5px;top:844px;width:19px;height:27.5px;border:1px solid #6e7c8a;border-radius:3px;background:linear-gradient(#ffffff,#eef1f8 40%,#d5ddec);"></div>
<div class="a" style="left:50.5px;top:844px;width:19px;height:27.5px;border:1px solid #6e7c8a;border-radius:3px;background:linear-gradient(#ffffff,#eef1f8 40%,#d5ddec);"></div>
<div class="a" style="left:70.5px;top:844px;width:19px;height:27.5px;border:1px solid #6e7c8a;border-radius:3px;background:linear-gradient(#ffffff,#eef1f8 40%,#d5ddec);"></div>
<svg class="a" style="left:14px;top:853px" width="12" height="10"><path d="M1.5 1 V9 M11 1.5 L3.5 5 L11 8.5" fill="none" stroke="#8a8a8a" stroke-width="1.1"/><path d="M4 5.6 L11 9" stroke="#fff" stroke-width="1"/></svg>
<svg class="a" style="left:35px;top:853px" width="12" height="10"><path d="M10 1.5 L2.5 5 L10 8.5" fill="none" stroke="#8a8a8a" stroke-width="1.1"/></svg>
<svg class="a" style="left:55px;top:853px" width="12" height="10"><path d="M2 1.5 L9.5 5 L2 8.5 Z" fill="none" stroke="#8a8a8a" stroke-width="1.1"/></svg>
<svg class="a" style="left:74px;top:853px" width="12" height="10"><path d="M1 1.5 L8.5 5 L1 8.5 Z M10.5 1 V9" fill="none" stroke="#8a8a8a" stroke-width="1.1"/></svg>
<div class="a" style="left:94.1px;top:846.2px;width:56.6px;height:24.5px;border:1px solid #6e7c8a;border-radius:3px;background:linear-gradient(#ffffff,#eef1f8 40%,#d5ddec);"></div>
<svg class="a" style="left:101px;top:851px" width="13" height="17"><defs><linearGradient id="fg" x1="0" y1="1" x2="0" y2="0"><stop offset="0" stop-color="#ffe070"/><stop offset="0.5" stop-color="#ff8020"/><stop offset="1" stop-color="#e03010"/></linearGradient></defs><path d="M7 0 C4 4 1 7 1 11 C1 15 4 16.5 6.5 16.5 C10 16.5 12 14 12 11 C12 8 10 6 9 4 C9 6 8 7 7.5 7 C8 4 7.5 2 7 0 Z" fill="url(#fg)"/><path d="M6.5 16 C5 15 4.5 13 6.5 10 C7 12 9 13 8.5 16 Z" fill="#fff2b0"/></svg>
<div class="t" style="left:115px;top:852px;font-size:12px;line-height:14px;color:#4d6ca8;letter-spacing:-0.9px">ЦИСЗ</div>
<div class="a" style="left:151.7px;top:846.2px;width:15.9px;height:24.5px;border:1px solid #6e7c8a;border-radius:3px;background:linear-gradient(#ffffff,#eef1f8 40%,#d5ddec);"></div>
<svg class="a" style="left:155px;top:855px" width="8" height="5"><path d="M0 0 H8 L4 4.5 Z" fill="#000"/></svg>
<div class="a" style="left:169.4px;top:846.2px;width:24.2px;height:24.5px;border:1px solid #6e7c8a;border-radius:3px;background:linear-gradient(#ffffff,#eef1f8 40%,#d5ddec);"></div>
<svg class="a" style="left:173px;top:850px" width="14" height="18"><rect x="1" y="1" width="11" height="16" fill="#ee0000" stroke="#111" stroke-width="0.8"/><path d="M1 1 V17 M12 1 V17" stroke="#ff0" stroke-width="1" stroke-dasharray="1 1"/><path d="M4 4 L6.5 3 L9 4.5 L7 7.5 L4.5 7 Z" fill="#ffe000"/><path d="M4 12 H9 V14" stroke="#ffe000" stroke-width="1.3" fill="none"/></svg>
<div class="a" style="left:195.1px;top:846.2px;width:24.5px;height:24.5px;border:1px solid #6e7c8a;border-radius:3px;background:linear-gradient(#ffffff,#eef1f8 40%,#d5ddec);"></div>
<svg class="a" style="left:198px;top:850px" width="19" height="18"><path d="M2 4 C2 1 6 0.5 9 1 L14 3 C17 5 16 10 15 13 L9 13 L3 11 Z" fill="#9a9a9a" stroke="#111" stroke-width="1"/><path d="M9 6 L15 8 L15 13 L9 13 Z" fill="#303030"/><path d="M8 13 L18 14.5 L17 16 L8 15 Z" fill="#c8c8c8" stroke="#111" stroke-width="0.8"/><path d="M4 11 V18" stroke="#f0d000" stroke-width="2"/><path d="M2 5 L5 4" stroke="#e00" stroke-width="1.5"/></svg>
<div class="a" style="left:221.1px;top:846.2px;width:24.5px;height:24.5px;border:1px solid #6e7c8a;border-radius:3px;background:linear-gradient(#ffffff,#eef1f8 40%,#d5ddec);"></div>
<svg class="a" style="left:224px;top:850px" width="19" height="16"><circle cx="12.5" cy="4.5" r="3.6" fill="#f0b060"/><path d="M7 14.5 C7 9.5 9 8.5 12.5 8.5 C16 8.5 18 9.5 18 14.5 Z" fill="#40a040"/><circle cx="6" cy="5.5" r="3.6" fill="#b06020" stroke="#402010" stroke-width="0.8"/><path d="M0.5 15.5 C0.5 10.5 2.5 9.5 6 9.5 C9.5 9.5 11.5 10.5 11.5 15.5 Z" fill="#3060d0"/></svg>
<div class="a" style="left:247.1px;top:846.2px;width:24.5px;height:24.5px;border:1px solid #6e7c8a;border-radius:3px;background:linear-gradient(#ffffff,#eef1f8 40%,#d5ddec);"></div>
<svg class="a" style="left:251px;top:850px" width="16" height="18"><path d="M1.5 3 V16.5 H11" fill="none" stroke="#111" stroke-width="1"/><rect x="3.5" y="2.5" width="10" height="14" fill="#fff" stroke="#111" stroke-width="1.2"/><path d="M5 5 H12 M5 7.5 H12 M5 10 H12 M5 12.5 H12" stroke="#18c8e8" stroke-width="1.3"/><path d="M4.5 0.5 V3 M6.5 0.5 V3 M8.5 0.5 V3 M10.5 0.5 V3 M12.5 0.5 V3" stroke="#111" stroke-width="1"/></svg>
<div class="a" style="left:1717.3px;top:846.2px;width:24.4px;height:24.4px;border:1px solid #6e7c8a;border-radius:3px;background:linear-gradient(#ffffff,#eef1f8 40%,#d5ddec);"></div>
<svg class="a" style="left:1723.5px;top:850.5px" width="12" height="17"><path d="M1.5 5 V12.5 C1.5 16.3 9.5 16.3 9.5 12.5 V3.2 C9.5 0.2 4 0.2 4 3.2 V11.8 C4 13.8 7 13.8 7 11.8 V5" fill="none" stroke="#111" stroke-width="1.4"/></svg>
<div class="a" style="left:1827.5px;top:844.3px;width:27.3px;height:27.3px;border:1px solid #6e7c8a;border-radius:3px;background:linear-gradient(#ffffff,#eef1f8 40%,#d5ddec);"></div>
<svg class="a" style="left:1829px;top:846px" width="25" height="24"><defs><linearGradient id="cg" x1="0" y1="0" x2="1" y2="1"><stop offset="0" stop-color="#c8f870"/><stop offset="1" stop-color="#30b010"/></linearGradient></defs><path d="M0.8 10.5 L8.2 13 L23.8 1.5 L8.5 23.5 Z" fill="url(#cg)" stroke="#143c0a" stroke-width="1" stroke-linejoin="round"/></svg>
<div class="a" style="left:783.2px;top:320.8px;width:604.8px;height:265.8px;background:#f00000;border-radius:2px"></div>
<div class="a" style="left:786.1px;top:324px;width:598.9px;height:259.2px;background:#6a80c8"></div>
<div class="a" style="left:789px;top:345.5px;width:595.5px;height:232.5px;background:#d6dff2"></div>
<svg class="a" style="left:786.1px;top:324px" width="598.9" height="27">
<defs><linearGradient id="dtbb" x1="0" y1="0" x2="0" y2="1"><stop offset="0" stop-color="#9cb6ee"/><stop offset="0.2" stop-color="#7a92d6"/><stop offset="0.5" stop-color="#6474be"/><stop offset="1" stop-color="#5a68b0"/></linearGradient>
<linearGradient id="dtbl" x1="0" y1="0" x2="0" y2="1"><stop offset="0" stop-color="#f6f8fd"/><stop offset="0.45" stop-color="#e2e7f5"/><stop offset="0.75" stop-color="#c9d4ec"/><stop offset="1" stop-color="#c2cfea"/></linearGradient></defs>
<path d="M0 27 V8 Q0 0 8 0 H590.9 Q598.9 0 598.9 8 V27 Z" fill="url(#dtbb)"/>
<path d="M0 27 V21.5 H487.2 C495.2 21.5 498.8 19 505.4 11.2 C512 3.5 515.6 1 523.6 1 H591.9 Q597.9 1 597.9 7 V27 Z" fill="url(#dtbl)"/>
<path d="M0 21.5 H487.2 C495.2 21.5 498.8 19 505.4 11.2 C512 3.5 515.6 1 523.6 1 H591.9 Q597.9 1 597.9 7" fill="none" stroke="#34418c" stroke-width="1.1"/>
<path d="M0 22.5 H487.2 C495.2 22.5 498.8 20 506.4 12.2" fill="none" stroke="#ffffff" stroke-width="1"/>
</svg>
<div class="a" style="left:794px;top:330.3px;width:14px;height:13.7px;background:#fff;border-radius:2px"></div>
<svg class="a" style="left:795px;top:331px" width="12" height="12"><circle cx="6" cy="6" r="3.8" fill="none" stroke="#8e98c8" stroke-width="2.6" stroke-dasharray="1.4 0.5"/><path d="M1.5 10.5 L4 8" stroke="#e06040" stroke-width="1.2"/></svg>
<div class="t" style="left:811.2px;top:331.5px;font-size:12px;line-height:14px;color:#f2f5ff">Инвалидность</div>
<svg class="a" style="left:1365px;top:331.5px" width="13" height="12"><path d="M1 1 L12 11 M12 1 L1 11" stroke="#4a5470" stroke-width="1.9"/></svg>
<div class="a" style="left:789px;top:578px;width:596px;height:5.2px;background:linear-gradient(#e2e8f6,#c5d0ea);border-bottom:1px solid #8a9cc8"></div>
<div class="a" style="left:1383.5px;top:345.5px;width:1.5px;height:237.5px;background:#b5d5ea"></div>
<div class="a" style="left:786.1px;top:344px;width:2.9px;height:239.2px;background:linear-gradient(90deg,#7d94d8,#5d70bc)"></div>
<div class="t lbl" style="left:790px;top:358.5px;">Начало действия</div>
<div class="t lbl" style="left:790px;top:382.5px;">Окончание действия</div>
<div class="t lbl" style="left:790px;top:406.5px;">Серия документа</div>
<div class="t lbl" style="left:790px;top:430.5px;">№ документа</div>
<div class="t lbl" style="left:790px;top:454.5px;">Кем выдан</div>
<div class="t lbl" style="left:790px;top:479.5px;">Группа инвалидности</div>
<div class="a" style="left:916.4px;top:355.6px;width:128.9px;height:20.7px;background:#fff;border:1px solid #c4cad6"></div>
<div class="a" style="left:916.4px;top:379.6px;width:128.9px;height:20.7px;background:#fff;border:1px solid #c4cad6"></div>
<div class="a" style="left:918.8px;top:357.9px;width:33.2px;height:13px;background:#0078d7"></div>
<div class="a" style="left:925px;top:367px;width:2px;height:2px;background:#fff"></div><div class="a" style="left:935px;top:367px;width:2px;height:2px;background:#fff"></div>
<div class="a" style="left:925px;top:391px;width:2px;height:2px;background:#000"></div><div class="a" style="left:935px;top:391px;width:2px;height:2px;background:#000"></div>
<div class="a" style="left:1023.2px;top:357.9px;width:19.4px;height:15.5px;background:linear-gradient(#fff,#e4e9f2);border:1px solid #7a8496;border-radius:3px"></div>
<svg class="a" style="left:1027px;top:360.4px" width="12" height="11"><rect x="0.5" y="0.5" width="10" height="9.5" fill="#fff" stroke="#000" stroke-width="1"/><path d="M0.5 1.2 H10.5 M11 1 V11 M1 10.8 H11" stroke="#000" stroke-width="1.3"/><text x="5.6" y="9" text-anchor="middle" font-family="Liberation Sans" font-size="8" fill="#000" letter-spacing="-0.3">15</text></svg>
<div class="a" style="left:1023.2px;top:381.5px;width:19.4px;height:15.5px;background:linear-gradient(#fff,#e4e9f2);border:1px solid #7a8496;border-radius:3px"></div>
<svg class="a" style="left:1027px;top:384px" width="12" height="11"><rect x="0.5" y="0.5" width="10" height="9.5" fill="#fff" stroke="#000" stroke-width="1"/><path d="M0.5 1.2 H10.5 M11 1 V11 M1 10.8 H11" stroke="#000" stroke-width="1.3"/><text x="5.6" y="9" text-anchor="middle" font-family="Liberation Sans" font-size="8" fill="#000" letter-spacing="-0.3">15</text></svg>
<div class="a" style="left:916.4px;top:403.2px;width:461.6px;height:20.8px;background:#fff;border:1px solid #c4cad6"></div>
<div class="a" style="left:916.4px;top:427.3px;width:461.6px;height:20.7px;background:#fff;border:1px solid #c4cad6"></div>
<div class="a" style="left:916.4px;top:451.4px;width:461.6px;height:20.6px;background:#fff;border:1px solid #c4cad6"></div>
<div class="cmb" style="left:916.4px;top:475.4px;width:461.6px;height:20.8px;background:#fff"><div class="cbtn"></div></div>
<svg class="a" style="left:1362.5px;top:480.8px" width="8" height="10"><path d="M1 4 L4 1.5 L7 4 M1 6 L4 8.5 L7 6" fill="none" stroke="#1d2f5c" stroke-width="1.8"/></svg>
<div class="t" style="left:919.5px;top:479px;">&lt; не указана &gt;</div>
<div class="a" style="left:1307px;top:540px;width:31.8px;height:30px;border:1px solid #6e7c8a;border-radius:3px;background:linear-gradient(#ffffff,#eef1f8 40%,#d5ddec);"></div>
<svg class="a" style="left:1309px;top:542px" width="29" height="27"><defs><linearGradient id="cg2" x1="0" y1="0" x2="1" y2="1"><stop offset="0" stop-color="#c8f870"/><stop offset="1" stop-color="#30b010"/></linearGradient></defs><path d="M2.4 11.7 L10.2 14 L25.6 1.5 L10.3 24.3 Z" fill="url(#cg2)" stroke="#143c0a" stroke-width="1" stroke-linejoin="round"/></svg>
<div class="a" style="left:1345.1px;top:540px;width:31.6px;height:30px;border:1px solid #6e7c8a;border-radius:3px;background:linear-gradient(#ffffff,#eef1f8 40%,#d5ddec);"></div>
<svg class="a" style="left:1345.1px;top:540px" width="32" height="30"><defs><linearGradient id="xg" x1="0" y1="0" x2="0" y2="1"><stop offset="0" stop-color="#f06060"/><stop offset="0.5" stop-color="#e82020"/><stop offset="1" stop-color="#d01010"/></linearGradient></defs><path d="M9.8 9 L22.2 21.4 M22.2 9 L9.8 21.4" stroke="#500000" stroke-width="7.6" stroke-linecap="round"/><path d="M9.8 9 L22.2 21.4 M22.2 9 L9.8 21.4" stroke="url(#xg)" stroke-width="5.6" stroke-linecap="round"/></svg>

</body></html>
